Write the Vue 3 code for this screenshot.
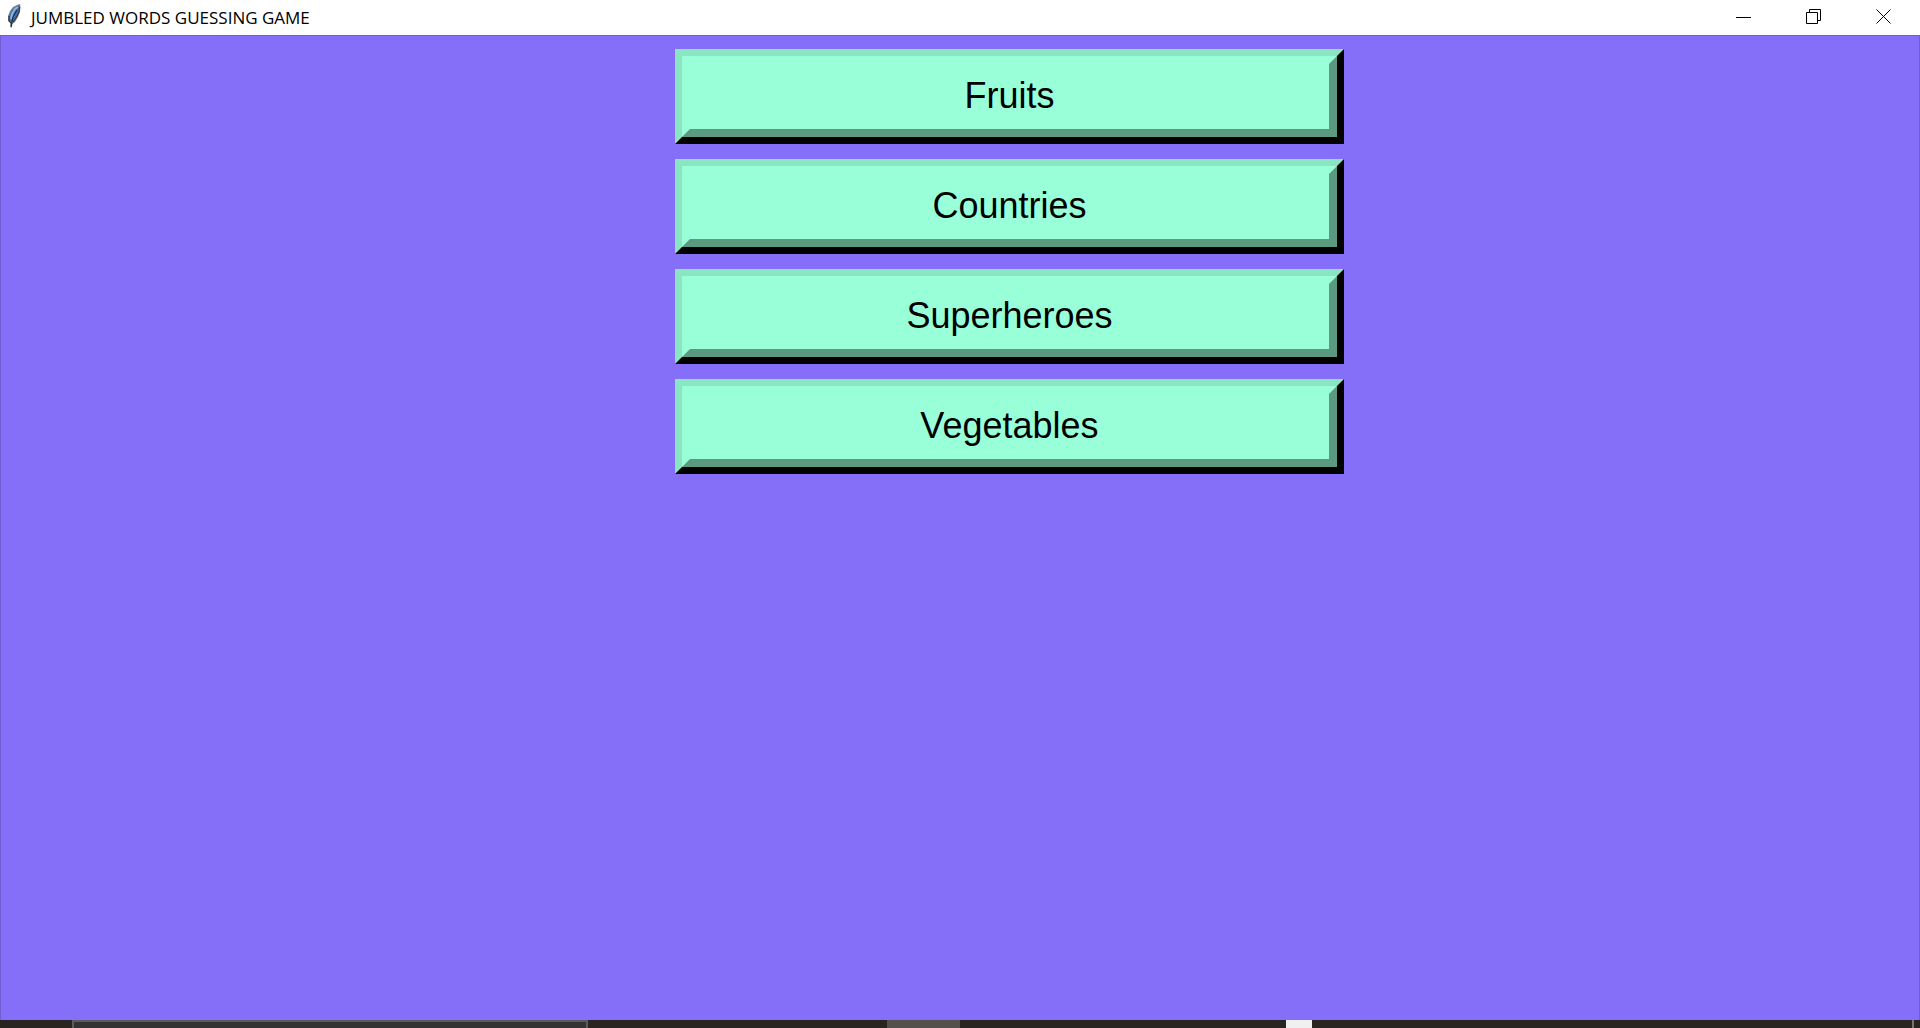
<script setup>
const categories = ['Fruits', 'Countries', 'Superheroes', 'Vegetables']
</script>

<template>
  <div class="window">
    <header class="titlebar">
      <svg class="feather" width="16" height="26" viewBox="0 0 16 26" aria-hidden="true">
        <path d="M10 1 L13 0 L13.5 3 L13 8 L11 13 L8 18 L5.5 20 L4.5 24 L3.5 23 L3 19 L1 17 L1 12 L3 7 L6 3 Z" fill="#777d84" />
        <path d="M11 2 L12.500 2 L12 7 L10 12 L7 17 L4 19 L2 16 L2 12 L5 6 Z" fill="#3f6ea8" />
        <path d="M11 3 L8 5 L5 10 L4 15" fill="none" stroke="#86b6ec" stroke-width="2" />
        <path d="M12.500 3 L12 8 L9 14 L6 18 M2 12 L2 17 L4 19" fill="none" stroke="#2b3036" stroke-width="1" />
        <path d="M10 6 L6 13 L4 23" fill="none" stroke="#1d2630" stroke-width="1" />
      </svg>
      <h1 class="title">JUMBLED WORDS GUESSING GAME</h1>
      <div class="controls">
        <button type="button" aria-label="Minimize">
          <svg width="16" height="16" viewBox="0 0 16 16"><path d="M0 8.5H15" /></svg>
        </button>
        <button type="button" aria-label="Restore">
          <svg width="16" height="16" viewBox="0 0 16 16"><path d="M.5 3.5H11.5V14.5H.5ZM3.5 3.5V.5H14.5V11.5H11.5" /></svg>
        </button>
        <button type="button" aria-label="Close">
          <svg width="16" height="16" viewBox="0 0 16 16"><path d="M.5 .5L14.5 14.5M14.5 .5L.5 14.5" /></svg>
        </button>
      </div>
    </header>

    <main class="board">
      <div class="menu">
        <button v-for="name in categories" :key="name" type="button" class="category">
          <span class="face">{{ name }}</span>
        </button>
      </div>
    </main>

    <footer class="taskbar">
      <div class="search"></div>
      <div class="task"></div>
      <div class="tile"></div>
      <div class="edge"></div>
    </footer>
  </div>
</template>

<style>
body {
  margin: 0;
}
</style>

<style scoped>
.window {
  display: flex;
  flex-direction: column;
  min-height: 100vh;
  background: #866ff8;
}

.titlebar {
  display: flex;
  align-items: center;
  box-sizing: border-box;
  height: 35px;
  flex: none;
  padding-left: 7px;
  background: #fff;
}

.feather {
  margin-bottom: 2px;
}

.title {
  flex: 1;
  margin: 0 0 0 8px;
  font: 400 17px/24px "Open Sans", "Noto Sans", sans-serif;
  color: #000;
}

.controls {
  display: flex;
  height: 100%;
  padding-right: 1px;
}

.controls button {
  display: flex;
  align-items: center;
  justify-content: center;
  width: 70px;
  padding: 0 0 2px;
  border: 0;
  background: none;
}

.controls path {
  fill: none;
  stroke: #000;
  stroke-width: 1;
}

.board {
  flex: 1;
  display: grid;
  grid-template-columns: 675fr 669fr 576fr;
  align-items: start;
  box-sizing: border-box;
  padding-top: 13px;
  border: 1px solid #705dcf;
  border-bottom: 0;
}

.menu {
  grid-column: 2;
  display: flex;
  flex-direction: column;
  gap: 15px;
}

.category {
  display: flex;
  height: 95px;
  padding: 0;
  border: 7px solid;
  border-color: #8ae6c2 #000 #000 #8ae6c2;
  background: #99ffd8;
}

.face {
  flex: 1;
  box-sizing: border-box;
  height: 81px;
  border: 8px solid;
  border-color: #99ffd8 #5c9981 #5c9981 #99ffd8;
  font: 400 36px/64px "Liberation Sans", Arial, sans-serif;
  text-align: center;
  color: #000;
}

.taskbar {
  display: grid;
  grid-template-columns: 72fr 516fr 299fr 73fr 326fr 26fr 600fr 2px 6px;
  flex: none;
  height: 8px;
  background: #2a2421;
}

.search {
  grid-column: 2;
  border: 2px solid #5c5c5c;
  border-bottom: 0;
  background: #333;
}

.task {
  grid-column: 4;
  background: #55504c;
}

.tile {
  grid-column: 6;
  background: #f0f0f0;
}

.edge {
  grid-column: 8;
  background: #77736f;
}
</style>
